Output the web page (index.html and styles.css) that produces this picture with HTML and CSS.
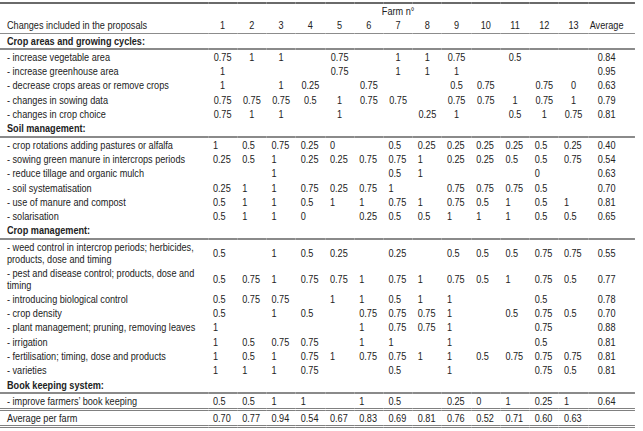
FILE: index.html
```html
<!DOCTYPE html>
<html>
<head>
<meta charset="utf-8">
<link rel="stylesheet" href="styles.css">
</head>
<body>
<div class="page">
<table class="t">
<colgroup>
<col class="c-label"><col class="c-f"><col class="c-f"><col class="c-f"><col class="c-f"><col class="c-f"><col class="c-f"><col class="c-f"><col class="c-f"><col class="c-f"><col class="c-f"><col class="c-f"><col class="c-f"><col class="c-f"><col class="c-avg">
</colgroup>
<thead>
<tr class="top"><td></td><td colspan="13" class="farm">Farm n°</td><td></td></tr>
<tr class="hdr"><td class="lab">Changes included in the proposals</td><td>1</td><td>2</td><td>3</td><td>4</td><td>5</td><td>6</td><td>7</td><td>8</td><td>9</td><td>10</td><td>11</td><td>12</td><td>13</td><td class="avg">Average</td></tr>
</thead>
<tbody class="ctr">
<tr class="sec"><td class="lab" colspan="15">Crop areas and growing cycles:</td></tr>
<tr><td class="lab">- increase vegetable area</td><td>0.75</td><td>1</td><td>1</td><td></td><td>0.75</td><td></td><td>1</td><td>1</td><td>0.75</td><td></td><td>0.5</td><td></td><td></td><td class="avg">0.84</td></tr>
<tr><td class="lab">- increase greenhouse area</td><td>1</td><td></td><td></td><td></td><td>0.75</td><td></td><td>1</td><td>1</td><td>1</td><td></td><td></td><td></td><td></td><td class="avg">0.95</td></tr>
<tr><td class="lab">- decrease crops areas or remove crops</td><td>1</td><td></td><td>1</td><td>0.25</td><td></td><td>0.75</td><td></td><td></td><td>0.5</td><td>0.75</td><td></td><td>0.75</td><td>0</td><td class="avg">0.63</td></tr>
<tr><td class="lab">- changes in sowing data</td><td>0.75</td><td>0.75</td><td>0.75</td><td>0.5</td><td>1</td><td>0.75</td><td>0.75</td><td></td><td>0.75</td><td>0.75</td><td>1</td><td>0.75</td><td>1</td><td class="avg">0.79</td></tr>
<tr><td class="lab">- changes in crop choice</td><td>0.75</td><td>1</td><td>1</td><td></td><td>1</td><td></td><td></td><td>0.25</td><td>1</td><td></td><td>0.5</td><td>1</td><td>0.75</td><td class="avg">0.81</td></tr>
</tbody>
<tbody class="lft">
<tr class="sec"><td class="lab" colspan="15">Soil management:</td></tr>
<tr><td class="lab">- crop rotations adding pastures or alfalfa</td><td>1</td><td>0.5</td><td>0.75</td><td>0.25</td><td>0</td><td></td><td>0.5</td><td>0.25</td><td>0.25</td><td>0.25</td><td>0.25</td><td>0.5</td><td>0.25</td><td class="avg">0.40</td></tr>
<tr><td class="lab">- sowing green manure in intercrops periods</td><td>0.25</td><td>0.5</td><td>1</td><td>0.25</td><td>0.25</td><td>0.75</td><td>0.75</td><td>1</td><td>0.25</td><td>0.25</td><td>0.5</td><td>0.5</td><td>0.75</td><td class="avg">0.54</td></tr>
<tr><td class="lab">- reduce tillage and organic mulch</td><td></td><td></td><td>1</td><td></td><td></td><td></td><td>0.5</td><td>1</td><td></td><td></td><td></td><td>0</td><td></td><td class="avg">0.63</td></tr>
<tr><td class="lab">- soil systematisation</td><td>0.25</td><td>1</td><td>1</td><td>0.75</td><td>0.25</td><td>0.75</td><td>1</td><td></td><td>0.75</td><td>0.75</td><td>0.75</td><td>0.5</td><td></td><td class="avg">0.70</td></tr>
<tr><td class="lab">- use of manure and compost</td><td>0.5</td><td>1</td><td>1</td><td>0.5</td><td>1</td><td>1</td><td>0.75</td><td>1</td><td>0.75</td><td>0.5</td><td>1</td><td>0.5</td><td>1</td><td class="avg">0.81</td></tr>
<tr><td class="lab">- solarisation</td><td>0.5</td><td>1</td><td>1</td><td>0</td><td></td><td>0.25</td><td>0.5</td><td>0.5</td><td>1</td><td>1</td><td>1</td><td>0.5</td><td>0.5</td><td class="avg">0.65</td></tr>
</tbody>
<tbody class="lft">
<tr class="sec"><td class="lab" colspan="15">Crop management:</td></tr>
<tr class="dbl"><td class="lab">- weed control in intercrop periods; herbicides,<br>products, dose and timing</td><td>0.5</td><td></td><td>1</td><td>0.5</td><td>0.25</td><td></td><td>0.25</td><td></td><td>0.5</td><td>0.5</td><td>0.5</td><td>0.75</td><td>0.75</td><td class="avg">0.55</td></tr>
<tr class="dbl"><td class="lab">- pest and disease control; products, dose and<br>timing</td><td>0.5</td><td>0.75</td><td>1</td><td>0.75</td><td>0.75</td><td>1</td><td>0.75</td><td>1</td><td>0.75</td><td>0.5</td><td>1</td><td>0.75</td><td>0.5</td><td class="avg">0.77</td></tr>
<tr><td class="lab">- introducing biological control</td><td>0.5</td><td>0.75</td><td>0.75</td><td></td><td>1</td><td>1</td><td>0.5</td><td>1</td><td>1</td><td></td><td></td><td>0.5</td><td></td><td class="avg">0.78</td></tr>
<tr><td class="lab">- crop density</td><td>0.5</td><td></td><td>1</td><td>0.5</td><td></td><td>0.75</td><td>0.75</td><td>0.75</td><td>1</td><td></td><td>0.5</td><td>0.75</td><td>0.5</td><td class="avg">0.70</td></tr>
<tr><td class="lab">- plant management; pruning, removing leaves</td><td>1</td><td></td><td></td><td></td><td></td><td>1</td><td>0.75</td><td>0.75</td><td>1</td><td></td><td></td><td>0.75</td><td></td><td class="avg">0.88</td></tr>
<tr><td class="lab">- irrigation</td><td>1</td><td>0.5</td><td>0.75</td><td>0.75</td><td></td><td>1</td><td>1</td><td></td><td>1</td><td></td><td></td><td>0.5</td><td></td><td class="avg">0.81</td></tr>
<tr><td class="lab">- fertilisation; timing, dose and products</td><td>1</td><td>0.5</td><td>1</td><td>0.75</td><td>1</td><td>0.75</td><td>0.75</td><td>1</td><td>1</td><td>0.5</td><td>0.75</td><td>0.75</td><td>0.75</td><td class="avg">0.81</td></tr>
<tr><td class="lab">- varieties</td><td>1</td><td>1</td><td>1</td><td>0.75</td><td></td><td></td><td>0.5</td><td></td><td>1</td><td></td><td></td><td>0.75</td><td>0.5</td><td class="avg">0.81</td></tr>
</tbody>
<tbody class="lft">
<tr class="sec"><td class="lab" colspan="15">Book keeping system:</td></tr>
<tr><td class="lab">- improve farmers’ book keeping</td><td>0.5</td><td>0.5</td><td>1</td><td>1</td><td></td><td>1</td><td>0.5</td><td></td><td>0.25</td><td>0</td><td>1</td><td>0.25</td><td>1</td><td class="avg">0.64</td></tr>
</tbody>
<tbody class="lft">
<tr class="total"><td class="lab">Average per farm</td><td>0.70</td><td>0.77</td><td>0.94</td><td>0.54</td><td>0.67</td><td>0.83</td><td>0.69</td><td>0.81</td><td>0.76</td><td>0.52</td><td>0.71</td><td>0.60</td><td>0.63</td><td class="avg"></td></tr>
</tbody>
</table>
</div>
</body>
</html>
```
FILE: styles.css
```css
html, body {
  margin: 0;
  padding: 0;
  background: #ffffff;
}
body {
  padding-top: 2px;
  font-family: "Liberation Sans", Arial, sans-serif;
  font-size: 11px;
  color: #222222;
}
.page {
  width: 643px;
  overflow: hidden;
}
/* the source table uses a condensed face (Arial Narrow); emulate it by a horizontal scale */
.t {
  border-collapse: collapse;
  table-layout: fixed;
  width: 765px;
  transform: scaleX(0.83);
  transform-origin: 0 0;
}
.c-label { width: 250.6px; }
.c-f { width: 35.24px; }
.c-avg { width: 56.3px; }
.t td {
  padding: 0;
  line-height: 14.3px;
  height: 14.3px;
  white-space: nowrap;
  vertical-align: middle;
  text-align: center;
}
.t td.lab {
  text-align: left;
  padding-left: 8.4px;
}
.t td.avg {
  text-align: center;
  padding-left: 0;
  padding-right: 12px;
}
.top td {
  border-top: 2px solid #6a6a6a;
}
.farm {
  text-align: center;
}
.hdr td {
  border-bottom: 1px solid #8c8c8c;
}
.sec td {
  font-weight: bold;
  border-bottom: 2px solid #8a8a8a;
}
.lft td {
  text-align: left;
  padding-left: 6px;
}
.dbl td.lab {
  line-height: 12px;
  padding-top: 1px;
  padding-bottom: 1px;
}
.total td {
  border-top: 3px double #808080;
  border-bottom: 3px double #808080;
}
```
